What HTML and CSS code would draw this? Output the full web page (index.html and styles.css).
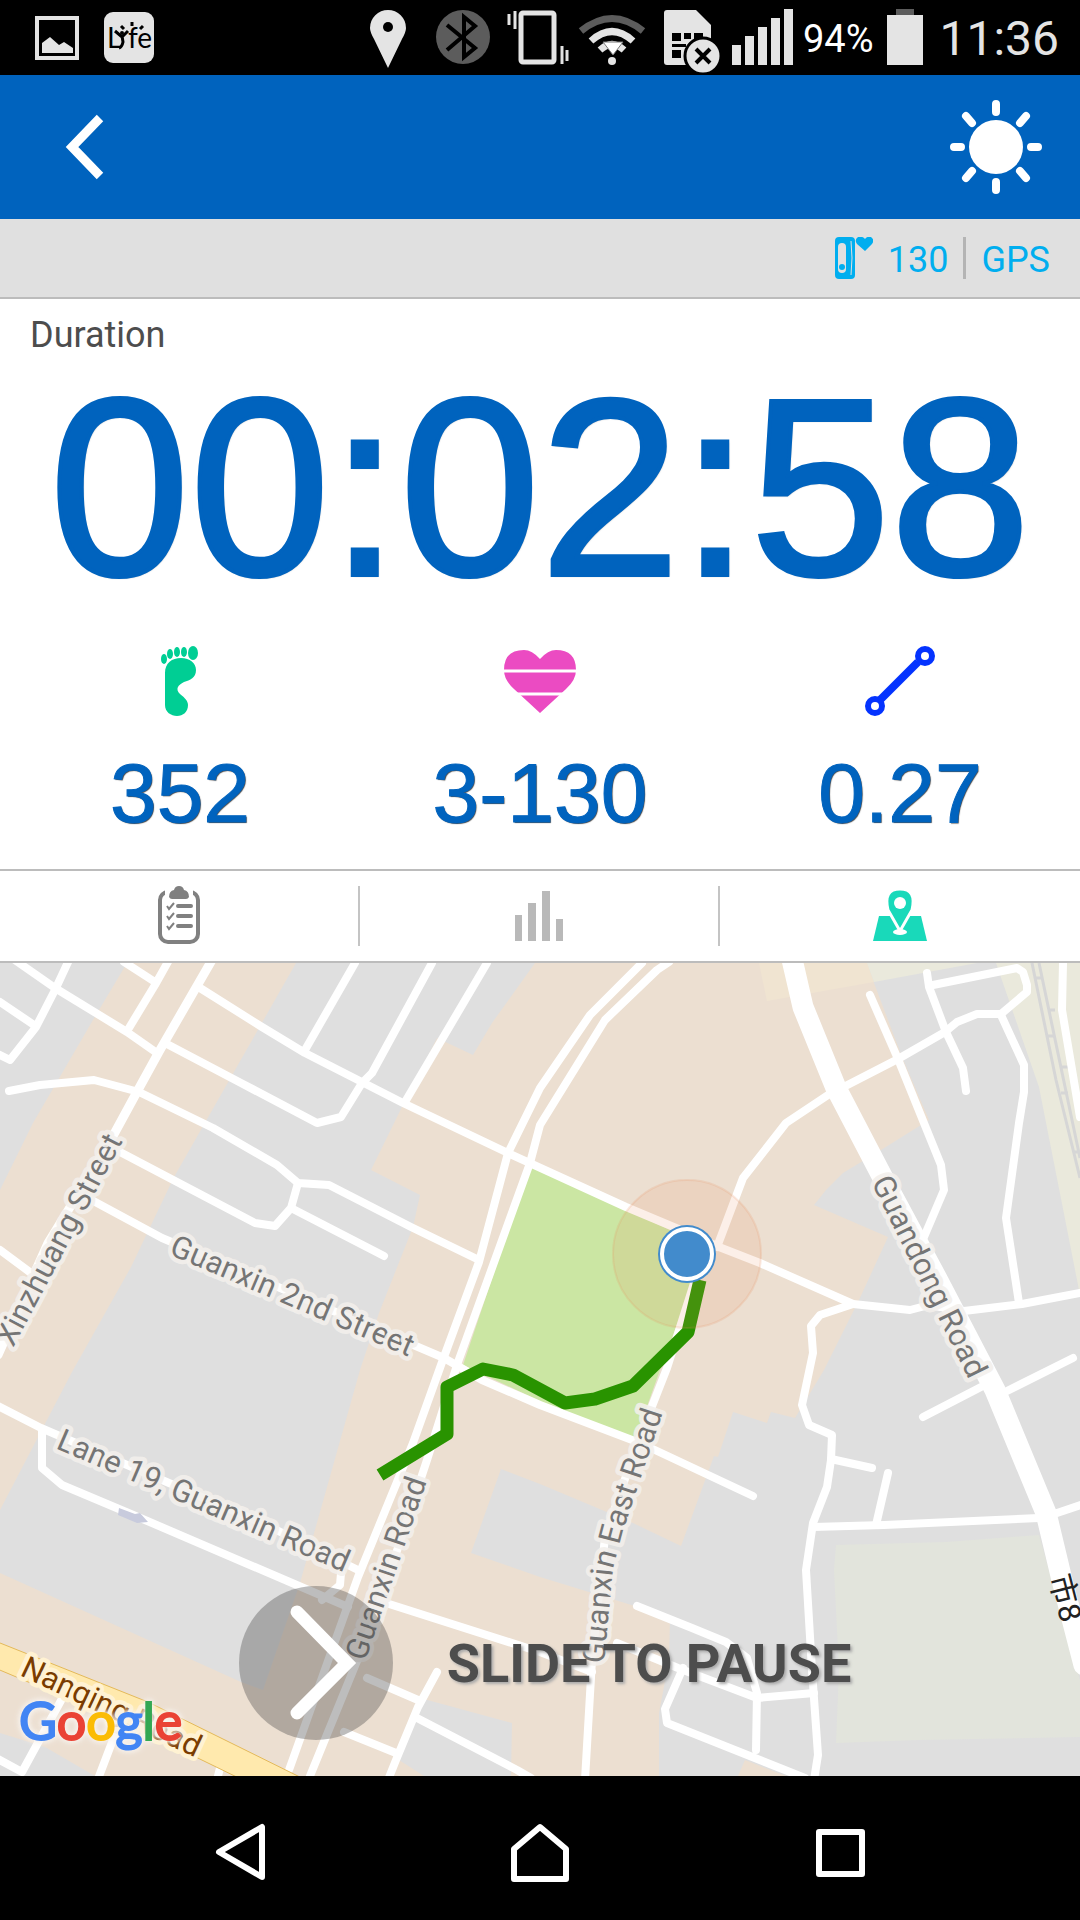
FILE: index.html
```html
<!doctype html>
<html lang="en">

<head>
    <meta charset="UTF-8">
    <meta name="viewport" content="width=device-width">
    <title>Workout</title>
    <link rel="stylesheet" href="styles.css">
</head>

<body>
    <div class="statusbar">
        <svg class="icon" width="55" height="75" viewBox="30 0 55 75">
            <path d="M37 18h40v40H37z" fill="none" stroke="#e4e4e4" stroke-width="4" />
            <path d="M42 53V43l8-6 9 8 5-3 9 6v5z" fill="#e4e4e4" />
        </svg>
        <svg class="icon" width="64" height="75" viewBox="97 0 64 75">
            <rect x="104" y="12" width="50" height="51" rx="9" fill="#e4e4e4" />
            <text class="lyfe" x="107" y="48">L<tspan x="128">fe</tspan></text>
            <circle cx="122" cy="33" r="2" />
            <path d="M115 31l7 6 6-6M122 36l1 6q-1 5-4 6M121 26l3 3M132 22v4M143 26l-3 3" fill="none" stroke="#000" stroke-width="3" />
        </svg>
        <div class="statusbar-right">
            <svg class="icon" width="64" height="75" viewBox="360 0 64 75">
                <path d="M388 68l-14-29q-4-7-4-11a18 18 0 0 1 36 0q0 4-4 11z" fill="#e4e4e4" />
                <circle cx="388" cy="27" r="5" />
            </svg>
            <svg class="icon" width="76" height="75" viewBox="424 0 76 75">
                <circle cx="463" cy="37" r="27" fill="#5c5c5c" />
                <path d="M447 25l28 23-11 9V17l11 9-28 24" fill="none" stroke="#000" stroke-width="4" />
            </svg>
            <svg class="icon" width="73" height="75" viewBox="500 0 73 75">
                <rect x="521" y="13" width="33" height="49" rx="2" fill="none" stroke="#e4e4e4" stroke-width="5" />
                <path d="M509 14v11M515 11v18M562 46v18M567 50v11" stroke="#e4e4e4" stroke-width="3" />
            </svg>
            <svg class="icon" width="82" height="75" viewBox="573 0 82 75">
                <g fill="none" stroke="#e4e4e4" stroke-width="7">
                    <path d="M581 31q31-25 62 0" stroke="#5c5c5c" />
                    <path d="M591 41q21-19 42 0" />
                    <path d="M600 50q12-11 24 0" />
                </g>
                <path d="M603 42h20l-10 13z" fill="#fff" stroke="#777" />
                <circle cx="612" cy="61" r="4" fill="#e4e4e4" />
            </svg>
            <svg class="icon" width="71" height="75" viewBox="655 0 71 75">
                <path d="M667 10h29l15 15v40h-44q-3 0-3-3V13q0-3 3-3z" fill="#e4e4e4" />
                <path d="M672 33h9v8h-9zM684 33h7v6h-7zM694 33h9v8h-9zM672 44h14v3h-14zM672 50h9v8h-9z" />
                <circle cx="703" cy="56" r="18" fill="#e4e4e4" stroke="#000" stroke-width="3" />
                <path d="M696 49l14 14M710 49l-14 14" stroke="#000" stroke-width="4" />
            </svg>
            <svg class="icon" width="72" height="75" viewBox="726 0 72 75">
                <path d="M732 45h9v20h-9zM745 36h9v29h-9zM758 27h9v38h-9zM771 18h9v47h-9zM784 9h9v56h-9z" fill="#e4e4e4" />
            </svg>
            <span class="percent">94%</span>
            <svg class="icon" width="64" height="75" viewBox="877 0 64 75">
                <path d="M898 9h18v6h-18z" fill="#5c5c5c" />
                <path d="M889 15h36v50h-36z" fill="#e4e4e4" />
            </svg>
            <span class="clock">11:36</span>
        </div>
    </div>

    <header class="header">
        <button type="button" class="icon-button" aria-label="Back">
            <svg width="40" height="66" viewBox="0 0 40 66">
                <path d="M36 4L8 33l28 29" fill="none" stroke="#fff" stroke-width="9" />
            </svg>
        </button>
        <button type="button" class="icon-button" aria-label="Brightness">
            <svg width="94" height="94" viewBox="-47 -47 94 94">
                <circle r="27" fill="#fff" />
                <path d="M0-43v8M0 35v8M-42 0h7M35 0h7M-30-31l6 7M24 24l6 7M30-31l-6 7M-24 24l-6 7" stroke="#fff" stroke-width="8" stroke-linecap="round" />
            </svg>
        </button>
    </header>

    <div class="sensors">
        <svg width="38" height="42" viewBox="0 0 38 42">
            <rect width="20" height="42" rx="4" fill="#00aeef" />
            <rect x="3" y="6" width="8" height="30" rx="4" fill="#e0e0e0" />
            <path d="M16 4q2 17 0 34" fill="none" stroke="#e0e0e0" stroke-width="1" />
            <circle cx="7" cy="30" r="3" fill="#00aeef" />
            <path d="M30 14l-8-7q-3-4 1-7 5-1 7 2 2-3 6-2 4 3 1 7z" fill="#00aeef" />
        </svg>
        <span class="pulse">130</span>
        <span class="gps">GPS</span>
    </div>

    <main class="summary">
        <h1 class="label">Duration</h1>
        <div class="timer">00:02:58</div>
        <ul class="metrics">
            <li>
                <svg width="72" height="70" viewBox="144 0 72 70">
                    <g fill="#00ce94">
                        <ellipse cx="164" cy="13" rx="3" ry="5" />
                        <ellipse cx="170" cy="8" rx="3" ry="5" />
                        <ellipse cx="177" cy="6" rx="3" ry="5" />
                        <ellipse cx="184" cy="6" rx="3" ry="5" />
                        <ellipse cx="193" cy="7" rx="5" ry="7" />
                        <path d="M181 12c9 0 15 5 15 12 0 8-6 10-12 12-6 3-9 7-4 12 5 4 8 7 8 11 0 7-5 11-11 11s-12-4-12-11V27c0-10 7-15 16-15z" />
                    </g>
                </svg>
                <span>352</span>
            </li>
            <li>
                <svg width="72" height="70" viewBox="0 0 72 70">
                    <path d="M36 67L10 43Q0 34 0 24 0 4 20 4q8 0 16 9 8-9 16-9 20 0 20 20 0 10-10 19z" fill="#eb4bc2" />
                    <path d="M0 25h72M0 48h72" stroke="#fff" stroke-width="3" />
                </svg>
                <span>3-130</span>
            </li>
            <li>
                <svg width="72" height="70" viewBox="0 0 72 70">
                    <g fill="none" stroke="#0433ff">
                        <path d="M16 54l38-38" stroke-width="8" />
                        <circle cx="11" cy="60" r="7" stroke-width="6" />
                        <circle cx="61" cy="10" r="7" stroke-width="6" />
                    </g>
                </svg>
                <span>0.27</span>
            </li>
        </ul>
    </main>

    <nav class="tabs">
        <button type="button" aria-label="Details">
            <svg width="44" height="60" viewBox="0 0 44 60">
                <rect x="3" y="6" width="38" height="50" rx="8" fill="none" stroke="#808080" stroke-width="4" />
                <path d="M8 3h28v6H8z" fill="#fff" />
                <path d="M12 11q0-6 5-7 1-4 5-4t5 4q5 1 5 7-1 2-3 2H15q-2 0-3-2z" fill="#808080" />
                <path d="M21 20h13M21 30h13M21 40h13" stroke="#808080" stroke-width="4" stroke-linecap="round" />
                <path d="M10 20l2 3 5-6M10 30l2 3 5-6M10 40l2 3 5-6" fill="none" stroke="#808080" stroke-width="2" />
            </svg>
        </button>
        <button type="button" aria-label="Chart">
            <svg width="48" height="60" viewBox="0 0 48 60">
                <path d="M0 29h7v26H0zM13 17h8v38h-8zM27 5h8v50h-8zM41 33h7v22h-7z" fill="#b9b9b9" />
            </svg>
        </button>
        <button type="button" aria-label="Map" aria-current="page">
            <svg width="54" height="60" viewBox="0 0 54 60">
                <path d="M6 30h42l6 25H0z" fill="#19d9ba" />
                <path d="M27 45L15 24Q10 3 27 3t12 21z" fill="#19d9ba" stroke="#fff" stroke-width="3" />
                <circle cx="27" cy="17" r="6" fill="#fff" />
                <ellipse cx="27" cy="46" rx="7" ry="3" fill="#fff" />
            </svg>
        </button>
    </nav>

    <section class="map">
        <svg class="map-canvas" viewBox="0 963 1080 813" preserveAspectRatio="xMidYMid slice" role="img" aria-label="Route map">
            <!-- blocks -->
            <path class="block" d="M127 963H296L174 1177 131 1267 72 1372 0 1510V1190L33 1123 93 1020z" />
            <path class="block" d="M535 963H867L874 983 902 1057 929 1120 881 1150 843 1173 826 1190 814 1205 888 1237 859 1300 824 1370 795 1418 771 1412 767 1423 733 1412 718 1457 714 1456 681 1546 633 1523 540 1484 501 1469 471 1553 540 1577 638 1607 670 1618 669 1660 659 1713V1776H0V1573L241 1682 263 1690 300 1583 360 1370 379 1313 413 1227 420 1195 371 1170 399 1113 437 1038 473 1055 492 1023z" />
            <path class="block" d="M745 1760l-7 16h48z" />
            <path class="ground" d="M0 1733l45 14 50 29H0zM420 1698l92 25-1 53h-87l-25-16z" />
            <path fill="#f0e4d1" d="M759 963l8 38 45-8 62-11-7-19z" />
            <path fill="#eae9dc" d="M867 963l7 19 103-19zM996 963l43 124 40 203h1V963z" />
            <path fill="#e2e4dc" d="M836 1545l110-3 93-7 41 145v57l-161 3-83 3 3-73-5-100z" />
            <path fill="#cbe6a3" d="M530 1166l162 74v45l-32 85-25 70-95-39-77-36z" />

            <path class="rail" d="M1032 963l24 117 24 98M1039 963l41 195M1034 978h7M1048 1010h7M1047 1036h7M1061 1067h7M1061 1093h7M1074 1152h6" />

            <!-- streets -->
            <g class="street">
                <path d="M12 958L55 988 127 1032 157 1053" />
                <path d="M69 960L55 990 36 1027 10 1060 0 1055M0 1002l34 23" />
                <path d="M124 962l31 20M169 960l-14 25-26 43" />
                <path d="M212 960L160 1050 138 1090 107 1147 48 1243-2 1355" stroke-width="9" />
                <path d="M200 988L262 1027 305 1053 403 1103 508 1153 626 1207 688 1233 719 1247 760 1263 853 1304 910 1310 929 1305 964 1311 1022 1304 1080 1293" />
                <path d="M165 1043L241 1083 317 1123 341 1117 362 1083 372 1073 432 963" />
                <path d="M355 963l-50 87M487 963l-82 139" />
                <path d="M9 1091L40 1085 94 1080 139 1092 213 1128 277 1165 298 1183 329 1185 411 1227 479 1260" />
                <path d="M298 1183L291 1208 275 1226 255 1223 120 1152M291 1208l93 48" />
                <path d="M86 1197L162 1238 255 1277 331 1310 444 1358 482 1380 540 1405 640 1443 753 1496" />
                <path d="M0 1250l31 23" />
                <path d="M642 963L590 1015 540 1088 508 1153 479 1262 441 1365 413 1443 358 1577 289 1770" />
                <path d="M669 962L657 970 605 1020 540 1125 530 1163 458 1362 427 1460 375 1617 310 1776" />
                <path d="M717 1247L743 1178 786 1123 828 1095 898 1059 945 1032 957 1022 977 1014H1001L1027 992V985L1023 972 1017 968 933 985" />
                <path d="M927 973L929 987 946 1032 963 1068 966 1091" />
                <path d="M870 995L898 1059 941 1165 944 1190 924 1237" />
                <path d="M1001 1015L1024 1065V1092L1019 1123 1006 1218 1019 1303" />
                <path d="M1063 963L1062 1010 1080 1117" />
                <path d="M853 1304L820 1315 811 1326 813 1353 802 1405 809 1425 832 1435 831 1460 827 1487 813 1523 806 1570 812 1670 818 1755 814 1780" />
                <path d="M831 1459l41 9M888 1473l-12 52" />
                <path d="M813 1527L884 1525 1039 1518 1057 1513 1084 1504" />
                <path d="M923 1417l58-30M1005 1392l68-34" />
                <path d="M695 1280L667 1368 636 1447 605 1537 592 1660 585 1780" />
                <path d="M386 1603L540 1652 592 1672M617 1643l61 25 79 30 57-5" />
                <path d="M637 1606L692 1628 726 1642 747 1658 757 1693 756 1750M683 1668l-18 41 2 14 138 55" />
                <path d="M367 1678l51 22M437 1672l-19 35-22 53-8 20M417 1718l100 52 14 8M344 1732l52 21" />
                <path d="M-2 1406L41 1428 262 1523 358 1570" />
                <path d="M42 1430V1468L62 1485 138 1517 348 1607M341 1573l-1 12-18 15" />
                <path d="M64 1695l-42 77-24-13M114 1737l-16 42M220 1768l-3 12" />
            </g>
            <path class="avenue" d="M791 955L803 1007 836 1088 884 1180 936 1277 995 1390 1046 1513 1062 1580 1084 1665" />
            <path d="M-5 1641L148 1702 310 1782H247L130 1725-5 1668z" fill="#ffe9ad" stroke="#e3b95a" />
            <path d="M119 1508l16 6 5-1 8 9-11 1-19-8z" fill="#c8cbdd" />

            <!-- street names -->
            <defs>
                <path id="xinzhuang" d="M13 1348L125 1137" />
                <path id="guanxin2" d="M168 1254L414 1359" />
                <path id="guandong" d="M871 1182L975 1392" />
                <path id="lane19" d="M55 1448L355 1577" />
                <path id="guanxin" d="M365 1662L431 1469" />
                <path id="guanxineast" d="M604 1664L613 1568 622 1534 668 1397" />
                <path id="nanqing" d="M19 1675L207 1763" />
                <path id="city8" d="M1049 1577L1069 1655" />
            </defs>
            <g class="name">
                <text><textPath href="#xinzhuang">Xinzhuang Street</textPath></text>
                <text><textPath href="#guanxin2">Guanxin 2nd Street</textPath></text>
                <text><textPath href="#guandong">Guandong Road</textPath></text>
                <text><textPath href="#lane19">Lane 19, Guanxin Road</textPath></text>
                <text><textPath href="#guanxin">Guanxin Road</textPath></text>
                <text><textPath href="#guanxineast">Guanxin East Road</textPath></text>
                <text class="name-major"><textPath href="#nanqing">Nanqing Road</textPath></text>
                <text class="name-route"><textPath href="#city8">市8</textPath></text>
            </g>

            <!-- track and position -->
            <path class="track" d="M700 1280L688 1332 633 1386 595 1399 565 1403 513 1375 483 1369 447 1387V1434L380 1475" />
            <circle cx="687" cy="1254" r="74" fill="#eb8c5a" fill-opacity=".14" stroke="#eb8c5a" stroke-opacity=".18" stroke-width="2" />
            <circle cx="687" cy="1254" r="29" fill="#428bcc" />
            <circle cx="687" cy="1254" r="25" fill="#428bcc" stroke="#fff" stroke-width="4" />

            <text class="google" x="19" y="1740"><tspan class="g-blue">G</tspan><tspan class="g-red">o</tspan><tspan class="g-yellow">o</tspan><tspan class="g-blue">g</tspan><tspan class="g-green">l</tspan><tspan class="g-red">e</tspan></text>
        </svg>
        <button type="button" class="slide">
            <svg width="154" height="154" viewBox="0 0 154 154">
                <circle cx="77" cy="77" r="77" fill="#484848" fill-opacity=".36" />
                <path d="M58 26l50 51-50 50" fill="none" stroke="#fff" stroke-width="13" stroke-linecap="round" />
            </svg>
            <span>SLIDE TO PAUSE</span>
        </button>
    </section>

    <nav class="navbar">
        <button type="button" aria-label="Back">
            <svg width="60" height="60" viewBox="0 0 60 60">
                <path d="M52 4v50L9 29z" />
            </svg>
        </button>
        <button type="button" aria-label="Home">
            <svg width="60" height="60" viewBox="0 0 60 60">
                <path d="M4 56V26L30 4l26 22v30z" />
            </svg>
        </button>
        <button type="button" aria-label="Recent apps">
            <svg width="60" height="60" viewBox="0 0 60 60">
                <path d="M9 9h43v42H9z" />
            </svg>
        </button>
    </nav>
</body>

</html>
```
FILE: styles.css
```css
* {
    box-sizing: border-box;
}

body {
    display: flex;
    flex-direction: column;
    min-height: 100vh;
    margin: 0;
    background: #fff;
    font-family: Roboto, "Noto Sans CJK TC", sans-serif;
}

svg {
    display: block;
    flex: none;
}

button {
    padding: 0;
    border: 0;
    background: none;
    font: inherit;
    color: inherit;
    cursor: pointer;
}

.statusbar {
    display: flex;
    height: 75px;
    padding: 0 21px 0 30px;
    gap: 12px;
    background: #000;
}

.statusbar-right {
    display: flex;
    margin-left: auto;
    line-height: 78px;
}

.percent {
    padding: 0 2px 0 5px;
    color: #fff;
    font-size: 38px;
}

.clock {
    color: #e4e4e4;
    font-size: 48px;
}

.lyfe {
    font: 28px Lato, sans-serif;
}

.header {
    display: flex;
    align-items: center;
    justify-content: space-between;
    height: 144px;
    padding: 0 37px 0 64px;
    background: #0063be;
}

.sensors {
    display: flex;
    align-items: center;
    justify-content: flex-end;
    height: 80px;
    padding: 0 30px;
    border-bottom: 2px solid #bcbcbc;
    background: #e0e0e0;
    color: #00aeef;
    font-size: 36px;
    line-height: 46px;
}

.sensors span {
    height: 42px;
}

.pulse {
    padding: 0 15px;
}

.gps {
    padding-left: 15px;
    border-left: 3px solid #b4b4b4;
}

.summary {
    padding: 15px 0 34px;
    color: #0063be;
    font-family: "Liberation Sans", Arial, sans-serif;
}

.label {
    margin: 0 30px 7px;
    color: #4d4d4d;
    font: 36px/42px Roboto, sans-serif;
}

.timer {
    font-size: 252px;
    line-height: 250px;
    text-align: center;
    text-shadow: 1px 1px 2px #666;
    -webkit-text-stroke: 4px #0063be;
    stroke-linejoin: round;
}

.metrics {
    display: grid;
    grid-template-columns: repeat(3, 1fr);
    margin: 33px 0 0;
    padding: 0;
    list-style: none;
    font-size: 84px;
    line-height: 84px;
    text-shadow: 1px 1px 1px #444;
    -webkit-text-stroke: 1px #0063be;
}

.metrics li {
    display: flex;
    flex-direction: column;
    align-items: center;
    gap: 35px;
}

.tabs {
    display: grid;
    grid-template-columns: repeat(3, 1fr);
    padding: 15px 0;
    border-top: 2px solid #bcbcbc;
    border-bottom: 2px solid #bcbcbc;
}

.tabs button {
    display: flex;
    justify-content: center;
    border-right: 2px solid #c4c4c4;
}

.tabs button:last-child {
    border-right: 0;
}

.map {
    position: relative;
    flex: 1;
    min-height: 600px;
    background: #dfdfdf;
}

/* fills whatever height is left between the tabs and the navigation bar */
.map-canvas {
    position: absolute;
    width: 100%;
    height: 100%;
}

.block {
    fill: #ecdfd1;
}

.ground {
    fill: #dfdfdf;
}

.street,
.avenue,
.rail,
.track {
    fill: none;
    stroke: #fff;
    stroke-width: 8px;
    stroke-linecap: round;
    stroke-linejoin: round;
}

.avenue {
    stroke-width: 21px;
}

.rail {
    stroke: #d6d6d6;
    stroke-width: 3px;
    stroke-linecap: butt;
}

.track {
    stroke: #299300;
    stroke-width: 13px;
    stroke-linecap: butt;
}

.name {
    fill: #757575;
    stroke: rgba(243, 240, 236, .9);
    stroke-width: 9px;
    stroke-linejoin: round;
    paint-order: stroke;
    font-size: 31px;
}

.name-major {
    fill: #7a3c00;
    stroke: #fff2d3;
}

.name-route {
    fill: #222;
    stroke: none;
}

.google {
    font: 52px Lato, sans-serif;
    stroke-width: 2px;
    filter: drop-shadow(0 0 3px #f7f2ed) drop-shadow(0 0 2px #f7f2ed);
}

.g-blue {
    fill: #4285f4;
    stroke: #4285f4;
}

.g-red {
    fill: #ea4335;
    stroke: #ea4335;
}

.g-yellow {
    fill: #fbbc05;
    stroke: #fbbc05;
}

.g-green {
    fill: #34a853;
    stroke: #34a853;
}

.slide {
    position: absolute;
    right: 0;
    bottom: 36px;
    left: 0;
    display: flex;
    align-items: center;
    justify-content: center;
    gap: 54px;
    padding-left: 10px;
    color: #4d4d4d;
    font-size: 54px;
    font-weight: bold;
    text-shadow: 2px 2px 3px #aaa;
}

.navbar {
    display: grid;
    grid-template-columns: repeat(3, 1fr);
    height: 144px;
    padding: 10px 90px 0;
    background: #000;
}

.navbar button {
    display: flex;
    align-items: center;
    justify-content: center;
}

.navbar path {
    fill: none;
    stroke: #fff;
    stroke-width: 6px;
    stroke-linejoin: round;
}
```
